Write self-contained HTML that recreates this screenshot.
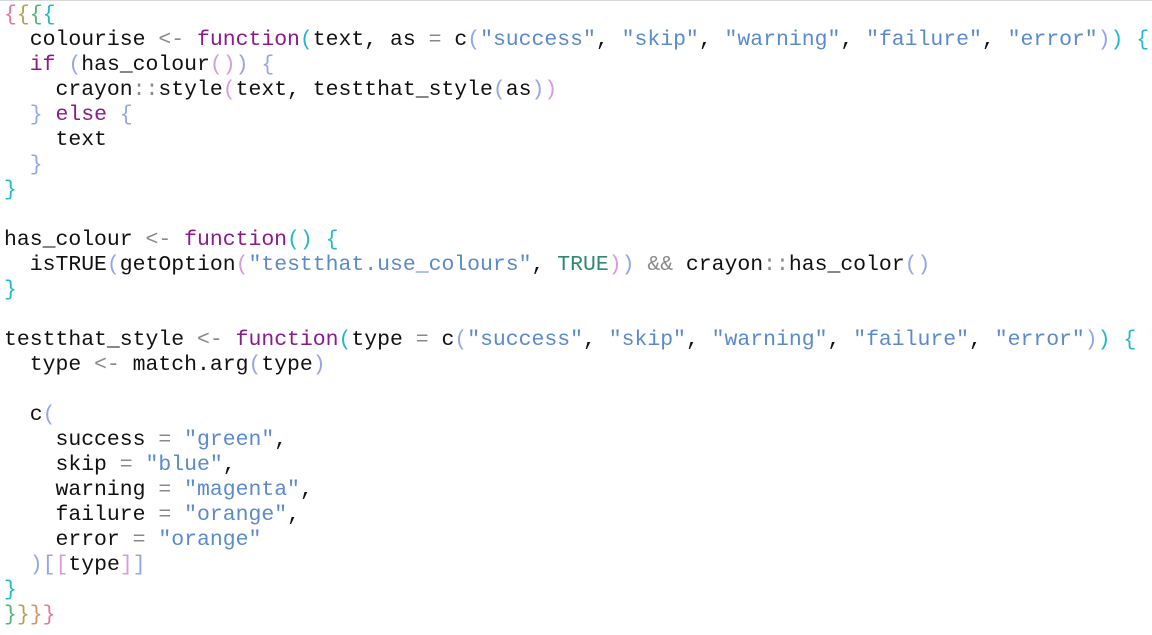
<!DOCTYPE html>
<html><head><meta charset="utf-8"><style>
html,body{margin:0;padding:0;background:#fff;width:1152px;height:635px;overflow:hidden}
body{border-top:1px solid #d8d8d8;box-sizing:border-box}
pre{margin:0;padding:2px 0 0 4px;font-family:"Liberation Mono",monospace;font-size:21.45px;line-height:25px;color:#111}
.k{color:#8b1a8b}.s{color:#5a8acb}.o{color:#888}.t{color:#2e8b6a}
.p0{color:#e8789a}.p1{color:#b8a050}.p2{color:#4db87a}.p3{color:#22b8c8}.p4{color:#95a5ea}.p5{color:#dc98e0}
</style></head><body><pre><span class="p0">{</span><span class="p1">{</span><span class="p2">{</span><span class="p3">{</span>
  colourise <span class="o">&lt;-</span> <span class="k">function</span><span class="p3">(</span>text, as <span class="o">=</span> c<span class="p4">(</span><span class="s">"success"</span>, <span class="s">"skip"</span>, <span class="s">"warning"</span>, <span class="s">"failure"</span>, <span class="s">"error"</span><span class="p4">)</span><span class="p3">)</span> <span class="p3">{</span>
  <span class="k">if</span> <span class="p4">(</span>has_colour<span class="p5">()</span><span class="p4">)</span> <span class="p4">{</span>
    crayon<span class="o">::</span>style<span class="p5">(</span>text, testthat_style<span class="p4">(</span>as<span class="p4">)</span><span class="p5">)</span>
  <span class="p4">}</span> <span class="k">else</span> <span class="p4">{</span>
    text
  <span class="p4">}</span>
<span class="p3">}</span>

has_colour <span class="o">&lt;-</span> <span class="k">function</span><span class="p3">()</span> <span class="p3">{</span>
  isTRUE<span class="p4">(</span>getOption<span class="p5">(</span><span class="s">"testthat.use_colours"</span>, <span class="t">TRUE</span><span class="p5">)</span><span class="p4">)</span> <span class="o">&amp;&amp;</span> crayon<span class="o">::</span>has_color<span class="p4">()</span>
<span class="p3">}</span>

testthat_style <span class="o">&lt;-</span> <span class="k">function</span><span class="p3">(</span>type <span class="o">=</span> c<span class="p4">(</span><span class="s">"success"</span>, <span class="s">"skip"</span>, <span class="s">"warning"</span>, <span class="s">"failure"</span>, <span class="s">"error"</span><span class="p4">)</span><span class="p3">)</span> <span class="p3">{</span>
  type <span class="o">&lt;-</span> match.arg<span class="p4">(</span>type<span class="p4">)</span>

  c<span class="p4">(</span>
    success <span class="o">=</span> <span class="s">"green"</span>,
    skip <span class="o">=</span> <span class="s">"blue"</span>,
    warning <span class="o">=</span> <span class="s">"magenta"</span>,
    failure <span class="o">=</span> <span class="s">"orange"</span>,
    error <span class="o">=</span> <span class="s">"orange"</span>
  <span class="p4">)[</span><span class="p5">[</span>type<span class="p5">]</span><span class="p4">]</span>
<span class="p3">}</span>
<span class="p2">}</span><span class="p1">}</span><span class="p1" style="color:#d89060">}</span><span class="p0">}</span></pre></body></html>
